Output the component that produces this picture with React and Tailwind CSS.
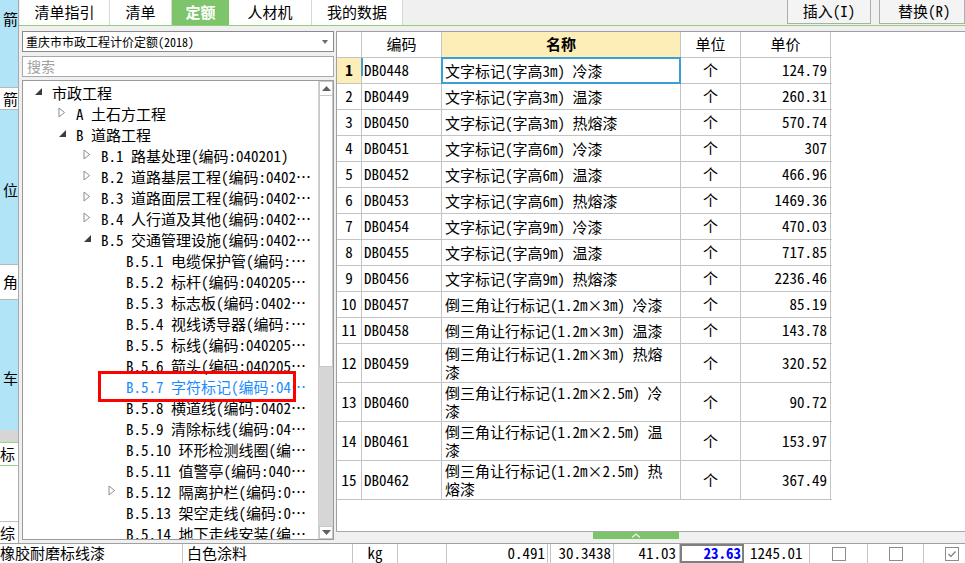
import React from 'react';

const tree = [
  { lv: 0, icon: 'open', text: '市政工程' },
  { lv: 1, icon: 'closed', text: 'A 土石方工程' },
  { lv: 1, icon: 'open', text: 'B 道路工程' },
  { lv: 2, icon: 'closed', text: 'B.1 路基处理(编码:040201)' },
  { lv: 2, icon: 'closed', text: 'B.2 道路基层工程(编码:0402⋯' },
  { lv: 2, icon: 'closed', text: 'B.3 道路面层工程(编码:0402⋯' },
  { lv: 2, icon: 'closed', text: 'B.4 人行道及其他(编码:0402⋯' },
  { lv: 2, icon: 'open', text: 'B.5 交通管理设施(编码:0402⋯' },
  { lv: 3, text: 'B.5.1 电缆保护管(编码:⋯' },
  { lv: 3, text: 'B.5.2 标杆(编码:040205⋯' },
  { lv: 3, text: 'B.5.3 标志板(编码:0402⋯' },
  { lv: 3, text: 'B.5.4 视线诱导器(编码:⋯' },
  { lv: 3, text: 'B.5.5 标线(编码:040205⋯' },
  { lv: 3, text: 'B.5.6 箭头(编码:040205⋯' },
  { lv: 3, text: 'B.5.7 字符标记(编码:04⋯', sel: true },
  { lv: 3, text: 'B.5.8 横道线(编码:0402⋯' },
  { lv: 3, text: 'B.5.9 清除标线(编码:04⋯' },
  { lv: 3, text: 'B.5.10 环形检测线圈(编⋯' },
  { lv: 3, text: 'B.5.11 值警亭(编码:040⋯' },
  { lv: 3, icon: 'closed', text: 'B.5.12 隔离护栏(编码:0⋯' },
  { lv: 3, text: 'B.5.13 架空走线(编码:0⋯' },
  { lv: 3, text: 'B.5.14 地下走线安装(编⋯' },
];

const rows = [
  ['DB0448', ['文字标记(字高3m) 冷漆'], '124.79'],
  ['DB0449', ['文字标记(字高3m) 温漆'], '260.31'],
  ['DB0450', ['文字标记(字高3m) 热熔漆'], '570.74'],
  ['DB0451', ['文字标记(字高6m) 冷漆'], '307'],
  ['DB0452', ['文字标记(字高6m) 温漆'], '466.96'],
  ['DB0453', ['文字标记(字高6m) 热熔漆'], '1469.36'],
  ['DB0454', ['文字标记(字高9m) 冷漆'], '470.03'],
  ['DB0455', ['文字标记(字高9m) 温漆'], '717.85'],
  ['DB0456', ['文字标记(字高9m) 热熔漆'], '2236.46'],
  ['DB0457', ['倒三角让行标记(1.2m×3m) 冷漆'], '85.19'],
  ['DB0458', ['倒三角让行标记(1.2m×3m) 温漆'], '143.78'],
  ['DB0459', ['倒三角让行标记(1.2m×3m) 热熔', '漆'], '320.52'],
  ['DB0460', ['倒三角让行标记(1.2m×2.5m) 冷', '漆'], '90.72'],
  ['DB0461', ['倒三角让行标记(1.2m×2.5m) 温', '漆'], '153.97'],
  ['DB0462', ['倒三角让行标记(1.2m×2.5m) 热', '熔漆'], '367.49'],
];

const levelPad = ['pl-[11px]', 'pl-[35px]', 'pl-[60px]', 'pl-[85px]'];

const Arrow = ({ type }) => {
  if (type === 'open') {
    return (
      <svg width="9" height="9" viewBox="0 0 9 9" className="-mt-[4px]">
        <polygon points="8,1 8,8 1,8" fill="#3c3c3c" />
      </svg>
    );
  }
  if (type === 'closed') {
    return (
      <svg width="8" height="11" viewBox="0 0 8 11" className="-mt-[4px]">
        <polygon points="1,1 6.5,5.5 1,10" fill="#fff" stroke="#8c8c8c" strokeWidth="1" />
      </svg>
    );
  }
  return null;
};

const LeftStrip = () => (
  <div className="w-[18px] shrink-0 flex flex-col bg-[#b1e4f6] text-[15px] leading-[20px] overflow-hidden">
    <div className="h-[88px] flex justify-end pt-[9px] border-b border-[#b8b8b8]">
      <span>箭</span>
    </div>
    <div className="h-[22px] bg-white flex justify-end items-center border-b border-[#b8b8b8]">
      <span>箭</span>
    </div>
    <div className="h-[155px] flex justify-end pt-[70px] border-b border-[#b8b8b8]">
      <span>位</span>
    </div>
    <div className="h-[35px] bg-white flex justify-end items-center border-b border-[#b8b8b8]">
      <span>角</span>
    </div>
    <div className="h-[130px] flex justify-end pt-[68px]">
      <span>车</span>
    </div>
    <div className="h-[12px] bg-[#d6d6d6]"></div>
    <div className="h-[24px] bg-white flex items-center border-y border-[#9ad48a]">
      <span>标</span>
    </div>
    <div className="h-[56px] bg-white border-b border-[#c0c0c0]"></div>
    <div className="flex-1 bg-white flex items-center">
      <span>综</span>
    </div>
  </div>
);

const TabBar = () => (
  <div className="h-[26px] flex border-b border-[#8fd07c] pl-[1px] shrink-0">
    <div className="w-[90px] bg-white border-r border-[#d4dccf] flex items-center justify-center text-[15px]">清单指引</div>
    <div className="w-[62px] bg-white border-r border-[#d4dccf] flex items-center justify-center text-[15px]">清单</div>
    <div className="w-[57px] bg-[#7dc46b] flex items-center justify-center text-[15px] font-bold text-white">定额</div>
    <div className="w-[83px] bg-white border-r border-[#d4dccf] flex items-center justify-center text-[15px]">人材机</div>
    <div className="w-[91px] bg-white border-r border-[#d4dccf] flex items-center justify-center text-[15px]">我的数据</div>
    <div className="flex-1"></div>
    <div className="w-[84px] h-[24px] shrink-0 bg-[#f4f4f4] border border-t-0 border-[#adadad] flex items-center justify-center text-[15px]">插入(I)</div>
    <div className="w-[8px] shrink-0"></div>
    <div className="w-[86px] h-[24px] shrink-0 bg-[#f4f4f4] border border-t-0 border-[#adadad] flex items-center pl-[18px] text-[15px]">替换(R)</div>
  </div>
);

const TreeScroll = () => (
  <div className="w-[15px] shrink-0 flex flex-col border-l border-[#d0d0d0] bg-[#d6d6d6]">
    <div className="h-[15px] bg-white border border-[#c8c8c8] flex items-center justify-center">
      <svg width="9" height="5" viewBox="0 0 9 5"><polygon points="0,5 4.5,0 9,5" fill="#606060" /></svg>
    </div>
    <div className="h-[271px] bg-white border-x border-b border-[#c8c8c8]"></div>
    <div className="flex-1"></div>
    <div className="h-[13px] bg-white border border-[#c8c8c8] flex items-center justify-center">
      <svg width="9" height="5" viewBox="0 0 9 5"><polygon points="0,0 4.5,5 9,0" fill="#606060" /></svg>
    </div>
  </div>
);

const LeftPanel = () => (
  <div className="w-[312px] shrink-0 flex flex-col pt-[5px] pb-[3px] gap-[3px]">
    <div className="h-[21px] bg-white border border-[#8a8a8a] flex items-center pl-[3px] pr-[5px] text-[12px] shrink-0">
      <span className="flex-1 whitespace-nowrap">重庆市市政工程计价定额(2018)</span>
      <svg width="6" height="4" viewBox="0 0 6 4"><polygon points="0,0 6,0 3,4" fill="#6c6c6c" /></svg>
    </div>
    <div className="h-[21px] mt-[1px] bg-white border border-[#a8a8a8] flex items-center pl-[4px] text-[14px] text-[#a0a0a0] shrink-0">搜索</div>
    <div className="flex-1 min-h-0 bg-white border border-[#9a9a9a] flex relative">
      <div className="flex-1 pt-[2px] overflow-hidden text-[15px]">
        {tree.map((n, i) => (
          <div key={i} className={`h-[21px] flex items-center whitespace-nowrap ${levelPad[n.lv]}`}>
            <div className="w-[18px] shrink-0 flex items-center"><Arrow type={n.icon} /></div>
            <span className={n.sel ? 'text-[#1a8cff]' : ''}>{n.text}</span>
          </div>
        ))}
      </div>
      <TreeScroll />
      <div className="absolute left-[75px] top-[290px] w-[198px] h-[31px] border-[3px] border-[#ff0000]"></div>
    </div>
  </div>
);

const cellBorder = 'border-r border-[#c4c4c4]';

const RightPanel = () => (
  <div className="flex-1 min-w-0 flex flex-col pt-[5px] ml-[2px]">
    <div className="flex-1 min-h-0 bg-white border-l border-t border-[#a0a0a0] text-[15px]">
      <div className="flex h-[26px] border-b border-[#c4c4c4] w-[495px]">
        <div className={`w-[25px] ${cellBorder}`}></div>
        <div className={`w-[80px] ${cellBorder} flex items-center justify-center`}>编码</div>
        <div className={`w-[239px] ${cellBorder} bg-[#fdedb7] flex items-center justify-center font-bold`}>名称</div>
        <div className={`w-[60px] ${cellBorder} flex items-center justify-center`}>单位</div>
        <div className={`w-[90px] ${cellBorder} flex items-center justify-center`}>单价</div>
      </div>
      {rows.map((r, i) => (
        <div key={i} className={`flex border-b border-[#c4c4c4] w-[495px] ${r[1].length > 1 ? 'h-[39px]' : 'h-[26px]'}`}>
          <div className={`w-[25px] ${cellBorder} flex items-center justify-center ${i === 0 ? 'bg-[#fdedb7] font-bold' : ''}`}>{i + 1}</div>
          <div className={`w-[80px] ${cellBorder} flex items-center pl-[2px] relative`}>
            {i === 0 && <span className="absolute -left-[1px] top-0 w-[2px] h-[18px] bg-[#3a9fd6]"></span>}
            {r[0]}
          </div>
          <div className={`w-[239px] ${cellBorder} flex flex-col justify-center pl-[3px] leading-[18px] whitespace-nowrap relative`}>
            {r[1].map((t, j) => <div key={j}>{t}</div>)}
            {i === 0 && <span className="absolute -left-[1px] -top-[1px] -right-[1px] -bottom-[1px] border-2 border-[#3a9fd6]"></span>}
          </div>
          <div className={`w-[60px] ${cellBorder} flex items-center justify-center`}>个</div>
          <div className={`w-[90px] ${cellBorder} flex items-center justify-end pr-[3px]`}>{r[2]}</div>
        </div>
      ))}
    </div>
    <div className="h-[12px] shrink-0 bg-[#f0f0f0] border-t border-[#a8a8a8] flex items-start pl-[257px]">
      <div className="w-[86px] h-[7px] bg-[#7cc46a] flex items-center justify-center">
        <svg width="10" height="5" viewBox="0 0 10 5"><polyline points="1,4.5 5,1 9,4.5" fill="none" stroke="#e8f6e2" strokeWidth="1.2" /></svg>
      </div>
    </div>
  </div>
);

const Check = ({ on }) => (
  <div className="w-[14px] h-[14px] bg-white border border-[#8c8c8c] flex items-center justify-center">
    {on && (
      <svg width="10" height="8" viewBox="0 0 10 8"><polyline points="1.5,4 4,6.5 8.5,1.5" fill="none" stroke="#7a7a7a" strokeWidth="1.2" /></svg>
    )}
  </div>
);

const BottomRow = () => (
  <div className="h-[20px] shrink-0 flex bg-white border-t border-[#a0a0a0] text-[15px] whitespace-nowrap">
    <div className={`w-[183px] ${cellBorder} flex items-center`}>橡胶耐磨标线漆</div>
    <div className={`w-[170px] ${cellBorder} flex items-center pl-[4px]`}>白色涂料</div>
    <div className={`w-[45px] ${cellBorder} flex items-center justify-center`}>kg</div>
    <div className={`w-[49px] ${cellBorder}`}></div>
    <div className={`w-[101px] ${cellBorder} flex items-center justify-end pr-[2px]`}>0.491</div>
    <div className={`w-[3px] ${cellBorder}`}></div>
    <div className={`w-[63px] ${cellBorder} flex items-center justify-end pr-[2px]`}>30.3438</div>
    <div className={`w-[66px] ${cellBorder} flex items-center justify-end pr-[3px]`}>41.03</div>
    <div className="w-[64px] border-2 border-[#7f7f7f] flex items-center justify-end pr-[1px] text-[#0000ff] font-bold">23.63</div>
    <div className={`w-[66px] ${cellBorder} flex items-center pl-[6px]`}>1245.01</div>
    <div className={`w-[58px] ${cellBorder} flex items-center justify-center`}><Check /></div>
    <div className={`w-[56px] ${cellBorder} flex items-center justify-center`}><Check /></div>
    <div className="flex-1 flex items-center pl-[21px]"><Check on /></div>
  </div>
);

export default function App() {
  return (
    <div className="w-[965px] h-[563px] overflow-hidden bg-[#f0f0f0] text-black flex flex-col font-['Noto_Sans_Mono_CJK_SC','Noto_Sans_CJK_SC',sans-serif]">
      <div className="flex h-[543px] shrink-0">
        <LeftStrip />
        <div className="flex-1 min-w-0 flex flex-col border-l border-[#a9a9a9]">
          <TabBar />
          <div className="flex flex-1 min-h-0 pl-[3px]">
            <LeftPanel />
            <RightPanel />
          </div>
        </div>
      </div>
      <BottomRow />
    </div>
  );
}
